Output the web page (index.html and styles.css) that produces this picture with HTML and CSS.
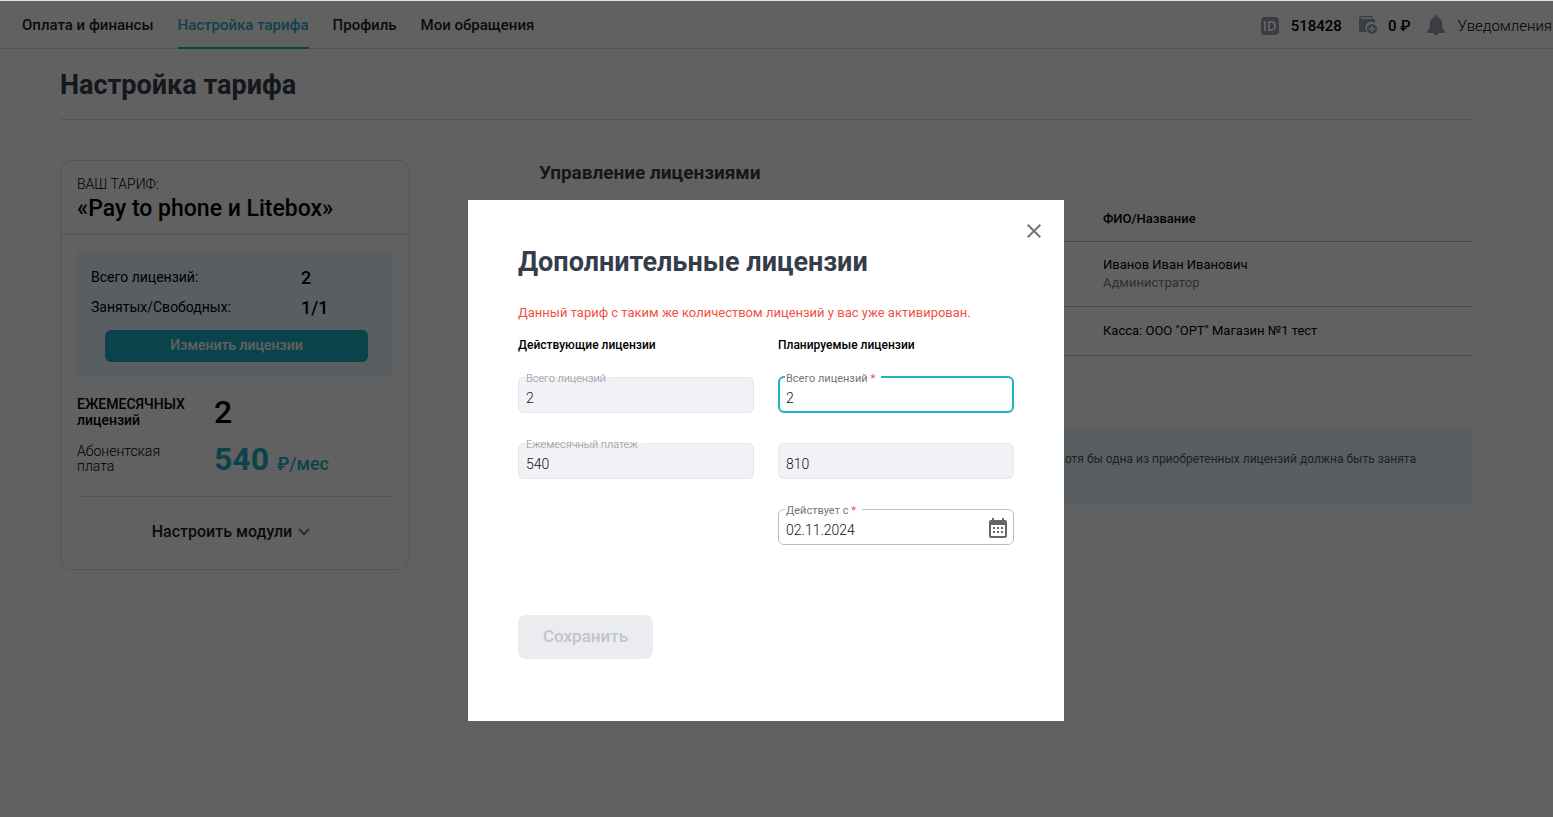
FILE: index.html
```html
<!DOCTYPE html>
<html lang="ru">
<head>
<meta charset="utf-8">
<title>Настройка тарифа</title>
<link rel="stylesheet" href="styles.css">
</head>
<body>
<header class="topbar">
  <nav class="tabs">
    <a class="tab" href="#">Оплата и финансы</a>
    <a class="tab tab-active" href="#">Настройка тарифа</a>
    <a class="tab" href="#">Профиль</a>
    <a class="tab" href="#">Мои обращения</a>
  </nav>
  <div class="account">
    <svg class="icon-id" width="18" height="18" viewBox="0 0 18 18"><path fill="#9aa1ae" fill-rule="evenodd" d="M4 0h10a4 4 0 0 1 4 4v10a4 4 0 0 1-4 4H4a4 4 0 0 1-4-4V4a4 4 0 0 1 4-4zM3 4v10h2V4zM7 4v10h3.500c3 0 4.500-2 4.500-5s-1.500-5-4.500-5zm2 2h1.500c1.800 0 2.500 1 2.500 3s-.7 3-2.500 3H9z"/></svg>
    <span class="account-id">518428</span>
    <svg class="icon-wallet" width="19" height="19" viewBox="0 0 19 19"><path fill="#9aa1ae" d="M2.500 0H14v1.500H2.500a.7.7 0 0 0 0 1.500H16v4.100A6 6 0 0 0 8 16H2a2 2 0 0 1-2-2V2.500A2.500 2.500 0 0 1 2.500 0z"/><path fill="#9aa1ae" fill-rule="evenodd" d="M13 8a5 5 0 1 1 0 10a5 5 0 0 1 0-10zm-.8 2v2.200H10v1.600h2.200V16h1.600v-2.200H16v-1.600h-2.200V10z"/></svg>
    <span class="account-sum">0 ₽</span>
    <svg class="icon-bell" width="18" height="22" viewBox="0 0 18 22"><path fill="#9aa1ae" d="M9 0c1 0 1.500.8 1.500 2C13.500 2.800 15 5.200 15 8c0 4 .8 6 3 8.500V18h-6.500v.5a2.600 2.600 0 0 1-5 0V18H0v-1.500C2.200 14 3 12 3 8c0-2.800 1.500-5.200 4.500-6C7.500.8 8 0 9 0z"/></svg>
    <span class="account-notes">Уведомления</span>
  </div>
</header>

<main class="page">
  <h1 class="page-title">Настройка тарифа</h1>
  <div class="columns">
    <section class="card">
      <div class="card-head">
        <div class="card-caption">ВАШ ТАРИФ:</div>
        <div class="card-name">«Pay to phone и Litebox»</div>
      </div>
      <div class="card-body">
        <div class="usage">
          <div class="usage-row"><span>Всего лицензий:</span><b>2</b></div>
          <div class="usage-row"><span>Занятых/Свободных:</span><b>1/1</b></div>
          <button class="btn-change" type="button">Изменить лицензии</button>
        </div>
        <div class="totals">
          <div class="total-label total-label-strong">ЕЖЕМЕСЯЧНЫХ<br>лицензий</div>
          <div class="total-value">2</div>
          <div class="total-label">Абонентская<br>плата</div>
          <div class="total-value total-price">540 <small>₽/мес</small></div>
        </div>
        <button class="btn-modules" type="button">Настроить модули
          <svg width="12" height="8" viewBox="0 0 12 8"><path d="M1 1l5 5 5-5" fill="none" stroke="#777" stroke-width="2"/></svg>
        </button>
      </div>
    </section>

    <section class="licenses">
      <h2 class="section-title">Управление лицензиями</h2>
      <table class="grid">
        <thead><tr><th class="col-first"></th><th>ФИО/Название</th></tr></thead>
        <tbody>
          <tr><td></td><td>Иванов Иван Иванович<div class="role">Администратор</div></td></tr>
          <tr><td></td><td>Касса: ООО "ОРТ" Магазин №1 тест</td></tr>
        </tbody>
      </table>
      <p class="note">Хотя бы одна из приобретенных лицензий должна быть занята</p>
    </section>
  </div>
</main>

<div class="overlay">
  <div class="modal" role="dialog" aria-labelledby="modal-title">
    <button class="btn-close" type="button" aria-label="Закрыть">
      <svg width="14" height="14" viewBox="0 0 14 14"><path d="M.7.7l12.600 12.600M13.300.7L.7 13.300" stroke="#757575" stroke-width="2"/></svg>
    </button>
    <h2 class="modal-title" id="modal-title">Дополнительные лицензии</h2>
    <p class="error">Данный тариф с таким же количеством лицензий у вас уже активирован.</p>
    <form class="form">
      <div class="form-col">
        <h3 class="form-heading">Действующие лицензии</h3>
        <fieldset class="field field-disabled">
          <legend><label for="cur-total">Всего лицензий</label></legend>
          <input id="cur-total" type="text" value="2" readonly>
        </fieldset>
        <fieldset class="field field-disabled">
          <legend><label for="cur-pay">Ежемесячный платеж</label></legend>
          <input id="cur-pay" type="text" value="540" readonly>
        </fieldset>
      </div>
      <div class="form-col">
        <h3 class="form-heading">Планируемые лицензии</h3>
        <fieldset class="field field-focus">
          <legend><label for="new-total">Всего лицензий <i>*</i></label></legend>
          <input id="new-total" type="text" value="2">
        </fieldset>
        <fieldset class="field field-disabled field-plain">
          <legend></legend>
          <input type="text" value="810" aria-label="Новый ежемесячный платеж" readonly>
        </fieldset>
        <fieldset class="field">
          <legend><label for="date">Действует с <i>*</i></label></legend>
          <div class="date-row">
            <input id="date" type="text" value="02.11.2024">
            <button class="btn-date" type="button" aria-label="Выбрать дату">
              <svg width="18" height="20" viewBox="0 0 18 20"><path fill="#666" fill-rule="evenodd" d="M3 0h2v2h8V0h2v2h1a2 2 0 0 1 2 2v14a2 2 0 0 1-2 2H2a2 2 0 0 1-2-2V4a2 2 0 0 1 2-2h1zM2 7v11h14V7zM4 9h2v2H4zM8 9h2v2H8zM12 9h2v2h-2zM4 13h2v2H4zM8 13h2v2H8zM12 13h2v2h-2z"/></svg>
            </button>
          </div>
        </fieldset>
      </div>
    </form>
    <button class="btn-save" type="button" disabled>Сохранить</button>
  </div>
</div>
</body>
</html>
```
FILE: styles.css
```css
* { box-sizing: border-box; }

body {
  margin: 0;
  background: #fff;
  color: #000;
  font-family: Roboto, "Liberation Sans", sans-serif;
  font-size: 14px;
  overflow: hidden;
}

button, input { font-family: inherit; }
button { border: 0; padding: 0; background: none; }
h1, h2, h3, p { margin: 0; }

/* Top bar */
.topbar {
  display: flex;
  justify-content: space-between;
  height: 49px;
  padding: 0 1px 0 22px;
  border-bottom: 1px solid #e0e0e0;
}
.tabs { display: flex; gap: 24px; }
.tab {
  display: flex;
  align-items: center;
  padding-top: 2px;
  border-bottom: 2px solid transparent;
  margin-bottom: -1px;
  color: #1d1d1d;
  font-size: 15px;
  font-weight: 500;
  text-decoration: none;
}
.tab-active { color: #1fb1c5; border-color: #1fb1c5; }
.account {
  display: flex;
  align-items: center;
  padding-top: 3px;
  font-size: 15px;
  font-weight: 500;
  white-space: nowrap;
}
.account-id { margin: 0 17px 0 12px; }
.account-sum { margin: 0 17px 0 10px; }
.account-notes { margin-left: 12px; font-weight: 300; }

/* Page */
.page { padding: 19px 81px 0 60px; }
.page-title {
  padding-bottom: 17px;
  border-bottom: 1px solid #e0e0e0;
  color: #363d4a;
  font-size: 27px;
  line-height: 34px;
}
.columns {
  display: grid;
  grid-template-columns: 350px 1fr;
  column-gap: 129px;
  align-items: start;
  padding-top: 40px;
}

/* Tariff card */
.card { border: 1px solid #e0e0e0; border-radius: 12px; }
.card-head {
  padding: 14px 16px 11px;
  border-bottom: 1px solid #e0e0e0;
}
.card-caption { font-size: 14px; font-weight: 300; line-height: 18px; }
.card-name { margin-top: 1px; font-size: 23px; font-weight: 500; line-height: 29px; }
.card-body { padding: 16px 16px 25px; }
.usage { padding: 11px 14px 14px; background: #e6f7ff; }
.usage-row {
  display: grid;
  grid-template-columns: 210px 1fr;
  align-items: center;
  height: 30px;
  font-size: 14px;
}
.usage-row b { font-size: 18px; font-weight: 500; }
.btn-change {
  display: block;
  width: calc(100% - 25px);
  height: 32px;
  margin: 8px 0 0 14px;
  padding-bottom: 2px;
  border-radius: 6px;
  background: #1fb1c5;
  color: #fff;
  font-size: 14px;
  font-weight: 500;
}
.totals {
  display: grid;
  grid-template-columns: 137px 1fr;
  row-gap: 15px;
  align-items: center;
  padding: 20px 0 21px;
  border-bottom: 1px solid #e0e0e0;
}
.total-label { font-size: 14px; font-weight: 300; line-height: 15px; }
.total-label-strong { font-weight: 500; line-height: 16px; }
.total-value { font-size: 32px; font-weight: 500; line-height: 32px; }
.total-price { color: #1fb1c5; font-weight: 700; }
.total-price small { font-size: 18px; font-weight: 500; line-height: 18px; }
.btn-modules {
  display: flex;
  align-items: center;
  justify-content: center;
  gap: 6px;
  width: 100%;
  margin-top: 23px;
  padding-right: 8px;
  color: #1d1d1d;
  font-size: 16px;
  font-weight: 500;
  line-height: 24px;
}

/* License table */
.section-title { color: #363d4a; font-size: 19px; line-height: 26px; }
.grid {
  width: 100%;
  margin-top: 12px;
  border-collapse: collapse;
  table-layout: fixed;
}
.col-first { width: 564px; }
.grid th, .grid td {
  padding: 0;
  border-bottom: 1px solid #bdbdbd;
  font-size: 13px;
  line-height: 18px;
  text-align: left;
}
.grid th { height: 43px; font-weight: 500; }
.grid td { height: 49px; font-weight: 400; }
.grid tbody tr:first-child td { height: 65px; }
.role { color: #808080; }
.note {
  min-height: 73px;
  margin-top: 74px;
  padding: 20px 56px 20px 16px;
  background: #e6f7ff;
  color: #555;
  font-size: 12px;
  line-height: 18px;
  text-align: right;
}

/* Dialog */
.overlay {
  position: fixed;
  inset: 1px 0 0;
  display: grid;
  place-items: center;
  padding: 103px 21px 0 0;
  background: rgba(0, 0, 0, .62);
  box-shadow: 0 -1px #dce3e1;
}
.modal {
  position: relative;
  width: 596px;
  padding: 45px 50px 62px;
  background: #fff;
}
.btn-close {
  position: absolute;
  top: 19px;
  right: 18px;
  display: grid;
  place-items: center;
  width: 24px;
  height: 24px;
}
.modal-title { color: #363d4a; font-size: 27px; line-height: 34px; }
.error { margin-top: 25px; color: #f0523f; font-size: 13px; line-height: 18px; }
.form {
  display: grid;
  grid-template-columns: 1fr 1fr;
  column-gap: 24px;
  margin-top: 14px;
}
.form-col { display: flex; flex-direction: column; gap: 24px; }
.form-heading { font-size: 12px; font-weight: 500; line-height: 18px; margin-bottom: -7px; }
.field {
  min-width: 0;
  height: 42px;
  margin: 0;
  padding: 0 6px;
  border: 1px solid #bdbdbd;
  border-radius: 6px;
}
.field legend {
  height: 12px;
  padding: 0 6px 0 1px;
  color: #757575;
  font-size: 11px;
  line-height: 15px;
}
.field i { color: #f0523f; font-style: normal; }
.field input {
  display: block;
  width: 100%;
  height: 29px;
  padding: 0 1px;
  border: 0;
  outline: 0;
  background: none;
  color: #111;
  font-size: 14px;
  font-weight: 300;
}
.field-disabled { border-color: #e6e6e8; background: #f1f2f7; }
.field-disabled legend { color: #8c8c92; font-weight: 300; }
.field-plain legend { padding: 0; }
.field-focus { padding: 0 5px; border: 2px solid #1fb1c5; }
.date-row { display: flex; align-items: center; }
.btn-date { display: grid; flex: none; margin-bottom: 4px; }
.btn-save {
  display: block;
  height: 44px;
  margin-top: 70px;
  padding: 0 25px 2px;
  border-radius: 8px;
  background: #ebecf0;
  color: #c1c4ca;
  font-size: 17px;
  font-weight: 500;
}
```
